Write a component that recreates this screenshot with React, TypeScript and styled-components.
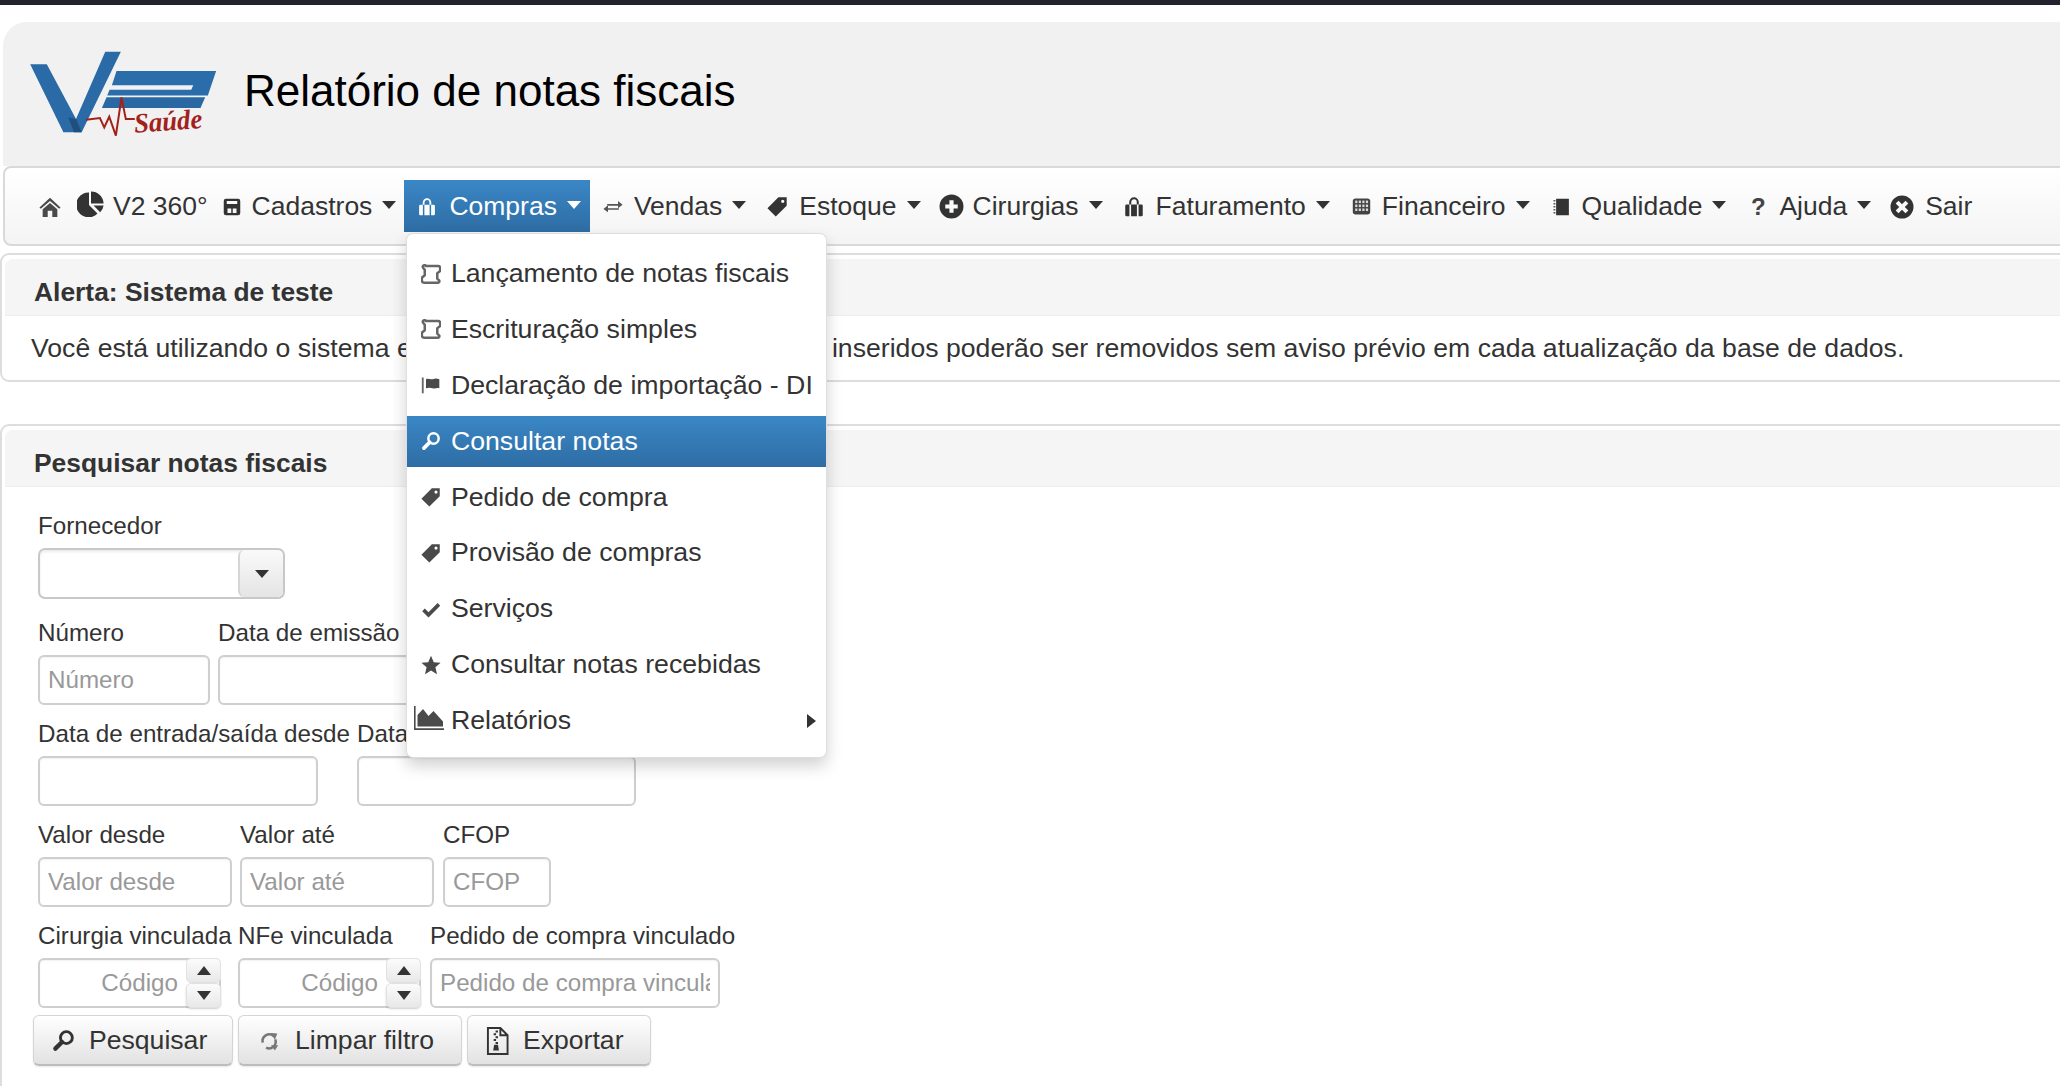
import React from "react";
import styled, { createGlobalStyle } from "styled-components";

const Global = createGlobalStyle`
  html, body { margin: 0; padding: 0; background: #fff; overflow: hidden; }
  body { font-family: "Liberation Sans", Arial, sans-serif; color: #333; }
  * { box-sizing: border-box; }
`;

const Page = styled.div`
  width: 2060px;
  height: 1086px;
  overflow: hidden;
`;
const TopBar = styled.div`
  height: 5px;
  background: #23232e;
`;
const Jumbotron = styled.header`
  margin: 17px 0 0 3px;
  height: 144px;
  width: 2100px;
  padding-left: 27px;
  display: flex;
  align-items: center;
  gap: 26px;
  background: #f1f1f1;
  border-top-left-radius: 24px;
`;
const Title = styled.h1`
  margin: 0 0 6px;
  font-size: 44px;
  font-weight: 400;
  color: #000;
`;
const Nav = styled.nav`
  margin-left: 3px;
  width: 2100px;
  height: 80px;
  padding-left: 20px;
  display: flex;
  align-items: center;
  border: 2px solid #d9d9d9;
  border-radius: 8px;
  background: linear-gradient(#fff, #f4f4f4);
`;
const NavItem = styled.div<{ $active?: boolean; $pl?: number; $pr?: number }>`
  position: relative;
  height: 52px;
  flex: none;
  display: flex;
  align-items: center;
  padding-top: 1px;
  padding-left: ${(p) => p.$pl ?? 14}px;
  padding-right: ${(p) => p.$pr ?? 7}px;
  font-size: 26.5px;
  color: ${(p) => (p.$active ? "#fff" : "#333")};
  background: ${(p) => (p.$active ? "linear-gradient(#3a87c6, #2e6da4)" : "transparent")};
`;
const NavIconSlot = styled.span<{ $w: number; $mr?: number; $up?: number }>`
  flex: none;
  display: flex;
  align-items: center;
  justify-content: center;
  width: ${(p) => p.$w}px;
  margin-right: ${(p) => p.$mr ?? 0}px;
  margin-bottom: ${(p) => p.$up ?? 0}px;
`;
const Caret = styled.span<{ $light?: boolean }>`
  width: 0;
  height: 0;
  margin: 0 0 3px 10px;
  border-top: 8px solid ${(p) => (p.$light ? "#fff" : "#333")};
  border-left: 7.5px solid transparent;
  border-right: 7.5px solid transparent;
`;
const Question = styled.span`
  font-weight: 700;
  font-size: 24px;
  color: #444;
`;
const Menu = styled.div`
  position: absolute;
  top: calc(100% + 1px);
  left: 2px;
  width: 421px;
  height: 525px;
  padding: 14px 0 0;
  background: #fff;
  border: 1px solid rgba(0, 0, 0, 0.13);
  border-radius: 7px;
  box-shadow: 0 8px 16px rgba(0, 0, 0, 0.18);
  z-index: 10;
`;
const MenuItem = styled.div<{ $active?: boolean }>`
  height: 51px;
  margin-bottom: 4.9px;
  padding: 0 10px 0 13.5px;
  display: flex;
  align-items: center;
  font-size: 26.7px;
  color: ${(p) => (p.$active ? "#fff" : "#333")};
  background: ${(p) => (p.$active ? "linear-gradient(#3a87c6, #2e6da4)" : "transparent")};
`;
const MenuIconSlot = styled.span<{ $wide?: boolean; $active?: boolean }>`
  flex: none;
  display: flex;
  align-items: center;
  justify-content: center;
  width: ${(p) => (p.$wide ? 30 : 20)}px;
  margin-left: ${(p) => (p.$wide ? -7 : 0)}px;
  margin-right: ${(p) => (p.$wide ? 7 : 10)}px;
  margin-bottom: ${(p) => (p.$wide ? 6 : 0)}px;
  color: ${(p) => (p.$active ? "#fff" : "#4a4a4a")};
`;
const SubCaret = styled.span`
  margin-left: auto;
  width: 0;
  height: 0;
  border-left: 9px solid #333;
  border-top: 7.5px solid transparent;
  border-bottom: 7.5px solid transparent;
`;
const Panel = styled.section<{ $mt: number; $h: number }>`
  margin-top: ${(p) => p.$mt}px;
  width: 2100px;
  height: ${(p) => p.$h}px;
  padding: 4px 0 0 3px;
  border: 2px solid #dddddd;
  border-radius: 9px;
`;
const PanelHeader = styled.h3`
  margin: 0;
  height: 57px;
  padding: 10px 0 0 29px;
  display: flex;
  align-items: center;
  font-size: 26.4px;
  font-weight: 700;
  color: #333;
  background: #f5f5f5;
  border-bottom: 1px solid #eeeeee;
  border-radius: 8px 8px 0 0;
`;
const PanelBody = styled.p`
  margin: 0;
  height: 64px;
  padding-left: 26px;
  display: flex;
  align-items: center;
  font-size: 26.6px;
  letter-spacing: 0.025px;
  white-space: nowrap;
  color: #333;
`;
const Form = styled.div`
  padding: 10px 0 0 33px;
`;
const Row = styled.div<{ $mb?: number }>`
  display: flex;
  gap: 8px;
  margin-bottom: ${(p) => p.$mb ?? 0}px;
`;
const Field = styled.div<{ $w: number }>`
  flex: none;
  width: ${(p) => p.$w}px;
`;
const Label = styled.label`
  display: block;
  height: 34px;
  margin: 12px 0 5px;
  line-height: 34px;
  font-size: 24.2px;
  white-space: nowrap;
  color: #333;
`;
const Input = styled.input<{ $w: number; $right?: boolean }>`
  display: block;
  width: ${(p) => p.$w}px;
  height: 50px;
  padding: 0 ${(p) => (p.$right ? 41 : 8)}px 0 8px;
  border: 2px solid #cfcfcf;
  border-radius: 6px;
  background: #fff;
  font: 24.2px "Liberation Sans", Arial, sans-serif;
  color: #555;
  text-align: ${(p) => (p.$right ? "right" : "left")};
  box-shadow: inset 0 1px 2px rgba(0, 0, 0, 0.06);
  &::placeholder { color: #999; opacity: 1; }
`;
const Select = styled.div`
  position: relative;
  width: 247px;
  height: 51px;
  border: 2px solid #c8c8c8;
  border-radius: 7px;
  background: #fff;
  box-shadow: inset 0 2px 3px rgba(0, 0, 0, 0.08);
`;
const SelectButton = styled.div`
  position: absolute;
  top: 0;
  right: 0;
  bottom: 0;
  width: 45px;
  display: flex;
  align-items: center;
  justify-content: center;
  border-left: 2px solid #d5d5d5;
  border-radius: 6px;
  background: linear-gradient(#fafafa, #e4e4e4);
`;
const SelectCaret = styled.span`
  width: 0;
  height: 0;
  border-top: 8px solid #333;
  border-left: 7.5px solid transparent;
  border-right: 7.5px solid transparent;
`;
const SpinWrap = styled.div`
  position: relative;
  width: fit-content;
`;
const SpinStack = styled.div`
  position: absolute;
  top: 0;
  right: 0;
  width: 35px;
  height: 50px;
  display: flex;
  flex-direction: column;
`;
const SpinButton = styled.div<{ $down?: boolean }>`
  flex: 1;
  display: flex;
  align-items: center;
  justify-content: center;
  border: 1px solid #e2e2e2;
  border-radius: 5px;
  background: linear-gradient(#fbfbfb, #e8e8e8);
  box-shadow: ${(p) => (p.$down ? "0 1px 2px rgba(0,0,0,.2)" : "none")};
`;
const SpinArrow = styled.span<{ $down?: boolean }>`
  width: 0;
  height: 0;
  border-left: 7px solid transparent;
  border-right: 7px solid transparent;
  ${(p) => (p.$down ? "border-top: 9px solid #333;" : "border-bottom: 9px solid #333;")}
`;
const Actions = styled.div`
  display: flex;
  gap: 5px;
  margin: 7px 0 0 -5px;
`;
const Button = styled.button<{ $w: number; $iw: number; $mr: number; $pl: number }>`
  width: ${(p) => p.$w}px;
  height: 51px;
  padding: 1px 0 0 ${(p) => p.$pl}px;
  display: flex;
  align-items: center;
  border: 1px solid #d5d5d5;
  border-bottom: 2px solid #bdbdbd;
  border-radius: 6px;
  background: linear-gradient(#ffffff, #e2e2e2);
  box-shadow: 0 1px 2px rgba(0, 0, 0, 0.1);
  font: 26.6px "Liberation Sans", Arial, sans-serif;
  color: #333;
  svg { flex: none; width: ${(p) => p.$iw}px; margin-right: ${(p) => p.$mr}px; }
`;

type IconProps = { s?: number; h?: number };
const G: React.FC<IconProps & { vb?: string; children: React.ReactNode }> = ({ s = 20, h, vb = "0 0 24 24", children }) => (
  <svg width={s} height={h ?? s} viewBox={vb} fill="currentColor" aria-hidden="true">
    {children}
  </svg>
);
const Home = (p: IconProps) => (
  <G {...p}>
    <path d="M12 2 0.5 12.5 2 14 12 5.5 22 14 23.5 12.5 12 2Z" fill="#4a4a4a" />
    <path fillRule="evenodd" d="M12 7.5 4 14.5V23H20V14.5L12 7.5ZM9.5 23V16H14.5V23H9.5Z" fill="#4a4a4a" />
  </G>
);
const Pie = (p: IconProps) => (
  <G {...p} vb="0 0 27 26">
    <path d="M12 1.5V14L20.5 22.5A12.4 12.4 0 1 1 12 1.5Z" />
    <path d="M14 .5A12.4 12.4 0 0 1 26.6 12.5H14Z" />
    <path d="M16.5 14.5H26.6A12 12 0 0 1 23.2 21.2Z" />
  </G>
);
const Save = (p: IconProps) => (
  <G {...p}>
    <path fillRule="evenodd" d="M4 1H20A3 3 0 0 1 23 4V20A3 3 0 0 1 20 23H4A3 3 0 0 1 1 20V4A3 3 0 0 1 4 1ZM5 4V8H19V4H5ZM6 14V20H11V14H6ZM13 14V20H18V14H13Z" />
  </G>
);
const Bag = (p: IconProps) => (
  <G {...p}>
    <path d="M7.5 9V6A4.5 4.5 0 0 1 16.5 6V9" fill="none" stroke="currentColor" strokeWidth="2.4" />
    <path d="M3 9H6.5V23H3A1.5 1.5 0 0 1 1.5 21.5V10.5A1.5 1.5 0 0 1 3 9ZM8.5 9H15.5V23H8.5ZM17.5 9H21A1.5 1.5 0 0 1 22.5 10.5V21.5A1.5 1.5 0 0 1 21 23H17.5Z" />
  </G>
);
const Transfer = (p: IconProps) => (
  <G {...p} vb="0 0 24 18">
    <path d="M5 6H18V2.5L23.5 7 18 11V8H5ZM19 11H6V7.5L.5 12 6 16V13H19Z" fill="#555" />
  </G>
);
const Tag = (p: IconProps) => (
  <G {...p}>
    <path fillRule="evenodd" d="M13 1.5 22.5 1.5 22.5 11 10 23.5.5 14 13 1.5ZM18 4.2A1.9 1.9 0 1 0 18 8 1.9 1.9 0 0 0 18 4.2Z" />
  </G>
);
const PlusCircle = (p: IconProps) => (
  <G {...p}>
    <path fillRule="evenodd" d="M12 .5A11.5 11.5 0 1 1 12 23.5 11.5 11.5 0 0 1 12 .5ZM10 6V10H6V14H10V18H14V14H18V10H14V6H10Z" />
  </G>
);
const XCircle = (p: IconProps) => (
  <G {...p}>
    <path fillRule="evenodd" d="M12 .5A11.5 11.5 0 1 1 12 23.5 11.5 11.5 0 0 1 12 .5ZM8.5 5.7 5.7 8.5 9.2 12 5.7 15.5 8.5 18.3 12 14.8 15.5 18.3 18.3 15.5 14.8 12 18.3 8.5 15.5 5.7 12 9.2 8.5 5.7Z" />
  </G>
);
const Grid = (p: IconProps) => (
  <G {...p}>
    <rect x="1" y="2" width="22" height="20" rx="3.5" fill="#444" />
    {[4.5, 9.5, 14.5].map((y) =>
      [4, 8.5, 13, 17.5].map((x) => <rect key={`${x}-${y}`} x={x} y={y} width="2.8" height="3.2" fill="#d8d8d8" />)
    )}
  </G>
);
const Book = (p: IconProps) => (
  <G {...p}>
    <rect x="5.5" y="1" width="17" height="22" fill="#333" />
    <path d="M2 2.5H4.5V4.5H2ZM2 6.5H4.5V8.5H2ZM2 10.5H4.5V12.5H2ZM2 14.5H4.5V16.5H2ZM2 18.5H4.5V20.5H2Z" fill="#555" />
  </G>
);
const Scroll = (p: IconProps) => (
  <G {...p}>
    <path
      d="M6 2.5H20.5A2.5 2.5 0 0 1 23 5V8.5L19.5 11V17.5L22 20A2 2 0 0 1 20 22.5H4A3 3 0 0 1 1 19.5V16.5L4.5 13.5V7L2.5 4.5A2 2 0 0 1 6 2.5Z"
      fill="none"
      stroke="#666"
      strokeWidth="3"
      strokeLinejoin="round"
    />
  </G>
);
const Flag = (p: IconProps) => (
  <G {...p}>
    <rect x="1" y="3" width="2.2" height="19" fill="#666" />
    <path d="M6 5C9 3.5 11 6 14 5S19 4 22 5V16C19 15 17 17 14 16S9 15 6 16Z" />
  </G>
);
const Search = (p: IconProps) => (
  <G {...p}>
    <circle cx="15" cy="9" r="6.2" fill="none" stroke="currentColor" strokeWidth="3" />
    <path d="M10.5 13.5 3.5 20.5" stroke="currentColor" strokeWidth="4.5" strokeLinecap="round" />
  </G>
);
const Check = (p: IconProps) => (
  <G {...p}>
    <path d="M3 13 9 19 21.5 6.5" fill="none" stroke="currentColor" strokeWidth="4.4" />
  </G>
);
const Star = (p: IconProps) => (
  <G {...p}>
    <path d="M12 1 15.3 8.6 23.5 9.4 17.3 14.8 19.2 23 12 18.7 4.8 23 6.7 14.8.5 9.4 8.7 8.6Z" />
  </G>
);
const AreaChart = (p: IconProps) => (
  <G {...p} vb="0 0 30 24">
    <path d="M0 0H1.6V22.2H30V24H0Z" />
    <path d="M3.5 20.5V9L9 3 14.5 10 19.5 5 29 15.5V20.5Z" />
  </G>
);
const Refresh = (p: IconProps) => (
  <G {...p}>
    <path d="M4.5 14A8 8 0 0 1 17.5 6" fill="none" stroke="#777" strokeWidth="3" />
    <path d="M19.5 10A8 8 0 0 1 8.5 20" fill="none" stroke="#777" strokeWidth="3" />
    <path d="M14 2.5 22 3 19 10.5Z" fill="#777" />
    <path d="M14.5 17 19 23.5 23 17Z" fill="#777" />
  </G>
);
const ZipFile = (p: IconProps) => (
  <G {...p} vb="0 0 24 30">
    <path d="M2 1.5H15L22.5 9V28.5H2ZM15 1.5V9H22.5" fill="none" stroke="currentColor" strokeWidth="2" />
    <path d="M10 4H12.5V6H10ZM8 7H10.5V9H8ZM10 10H12.5V12H10ZM8 13H10.5V15H8ZM10 16H12.5V18H10ZM8.5 19H12.5L13.5 25H7.5Z" />
  </G>
);

const Logo = () => (
  <svg width="188" height="87" viewBox="90 90 565 262" aria-label="V2 Saúde">
    <path d="M90 130H140L228 295 316 92H363L245 335H190Z" fill="#2a6aa6" />
    <path d="M228 295 245 335 222 335 205 290Z" fill="#1f4f7d" />
    <path d="M350 150H650L625 224H322L329 207H575L581 193H336Z" fill="#2b6cab" />
    <path d="M320 229H617L603 262H306Z" fill="#2a68a3" />
    <polyline
      points="258,297 300,292 313,320 328,288 348,345 365,230 378,295 405,295"
      fill="none"
      stroke="#a3211b"
      strokeWidth="6"
    />
    <text
      x="405"
      y="336"
      transform="rotate(-4 405 336)"
      fontFamily="'Liberation Serif', serif"
      fontStyle="italic"
      fontWeight="700"
      fontSize="84"
      fill="#a3211b"
      textLength="205"
      lengthAdjust="spacingAndGlyphs"
    >
      Saúde
    </text>
  </svg>
);

const navItems: {
  label?: string;
  icon: React.ReactNode;
  w: number;
  mr?: number;
  pl?: number;
  pr?: number;
  up?: number;
  caret?: boolean;
}[] = [
  { icon: <Home s={22} />, w: 22, pr: 2 },
  { label: "V2 360°", icon: <Pie s={27} h={26} />, w: 27, mr: 9, pr: 1, up: 6 },
  { label: "Cadastros", icon: <Save s={18} />, w: 18, mr: 11, caret: true, pr: 8 },
];
const navAfter: typeof navItems = [
  { label: "Vendas", icon: <Transfer s={20} h={15} />, w: 20, mr: 11, caret: true, pl: 13 },
  { label: "Estoque", icon: <Tag s={21} />, w: 21, mr: 11, caret: true },
  { label: "Cirurgias", icon: <PlusCircle s={25} />, w: 25, mr: 9, caret: true, pl: 11 },
  { label: "Faturamento", icon: <Bag s={20} />, w: 20, mr: 12, caret: true },
  { label: "Financeiro", icon: <Grid s={19} />, w: 19, mr: 11, caret: true, pl: 15 },
  { label: "Qualidade", icon: <Book s={20} />, w: 18, mr: 12, caret: true, pl: 15 },
  { label: "Ajuda", icon: <Question>?</Question>, w: 22, mr: 10, caret: true },
  { label: "Sair", icon: <XCircle s={24} />, w: 24, mr: 11, pl: 12 },
];

const NavEntry: React.FC<(typeof navItems)[number]> = ({ label, icon, w, mr, pl, pr, up, caret }) => (
  <NavItem $pl={pl} $pr={pr}>
    <NavIconSlot $w={w} $mr={mr} $up={up}>
      {icon}
    </NavIconSlot>
    {label}
    {caret && <Caret />}
  </NavItem>
);

const menuItems: { label: string; icon: React.ReactNode; active?: boolean; wide?: boolean; sub?: boolean }[] = [
  { label: "Lançamento de notas fiscais", icon: <Scroll s={20} /> },
  { label: "Escrituração simples", icon: <Scroll s={20} /> },
  { label: "Declaração de importação - DI", icon: <Flag s={20} /> },
  { label: "Consultar notas", icon: <Search s={20} />, active: true },
  { label: "Pedido de compra", icon: <Tag s={20} /> },
  { label: "Provisão de compras", icon: <Tag s={20} /> },
  { label: "Serviços", icon: <Check s={20} /> },
  { label: "Consultar notas recebidas", icon: <Star s={20} /> },
  { label: "Relatórios", icon: <AreaChart s={30} h={24} />, wide: true, sub: true },
];

const Spin = ({ w }: { w: number }) => (
  <SpinWrap>
    <Input $w={w} $right placeholder="Código" />
    <SpinStack>
      <SpinButton>
        <SpinArrow />
      </SpinButton>
      <SpinButton $down>
        <SpinArrow $down />
      </SpinButton>
    </SpinStack>
  </SpinWrap>
);

export default function App() {
  return (
    <Page>
      <Global />
      <TopBar />
      <Jumbotron>
        <Logo />
        <Title>Relatório de notas fiscais</Title>
      </Jumbotron>
      <Nav>
        {navItems.map((n, i) => (
          <NavEntry key={i} {...n} />
        ))}
        <NavItem $active $pr={9}>
          <NavIconSlot $w={18} $mr={13}>
            <Bag s={18} />
          </NavIconSlot>
          Compras
          <Caret $light />
          <Menu>
            {menuItems.map((m) => (
              <MenuItem key={m.label} $active={m.active}>
                <MenuIconSlot $wide={m.wide} $active={m.active}>
                  {m.icon}
                </MenuIconSlot>
                {m.label}
                {m.sub && <SubCaret />}
              </MenuItem>
            ))}
          </Menu>
        </NavItem>
        {navAfter.map((n, i) => (
          <NavEntry key={i} {...n} />
        ))}
      </Nav>
      <Panel $mt={7} $h={129}>
        <PanelHeader>Alerta: Sistema de teste</PanelHeader>
        <PanelBody>
          Você está utilizando o sistema em modo de testes. Todos os dados inseridos poderão ser removidos sem aviso
          prévio em cada atualização da base de dados.
        </PanelBody>
      </Panel>
      <Panel $mt={42} $h={700}>
        <PanelHeader>Pesquisar notas fiscais</PanelHeader>
        <Form>
          <Row $mb={5}>
            <Field $w={247}>
              <Label>Fornecedor</Label>
              <Select>
                <SelectButton>
                  <SelectCaret />
                </SelectButton>
              </Select>
            </Field>
          </Row>
          <Row>
            <Field $w={172}>
              <Label>Número</Label>
              <Input $w={172} placeholder="Número" />
            </Field>
            <Field $w={280}>
              <Label>Data de emissão</Label>
              <Input $w={280} />
            </Field>
          </Row>
          <Row>
            <Field $w={311}>
              <Label>Data de entrada/saída desde</Label>
              <Input $w={280} />
            </Field>
            <Field $w={311}>
              <Label>Data de entrada/saída até</Label>
              <Input $w={279} />
            </Field>
          </Row>
          <Row>
            <Field $w={194}>
              <Label>Valor desde</Label>
              <Input $w={194} placeholder="Valor desde" />
            </Field>
            <Field $w={195}>
              <Label>Valor até</Label>
              <Input $w={194} placeholder="Valor até" />
            </Field>
            <Field $w={108}>
              <Label>CFOP</Label>
              <Input $w={108} placeholder="CFOP" />
            </Field>
          </Row>
          <Row>
            <Field $w={192}>
              <Label>Cirurgia vinculada</Label>
              <Spin w={183} />
            </Field>
            <Field $w={184}>
              <Label>NFe vinculada</Label>
              <Spin w={183} />
            </Field>
            <Field $w={290}>
              <Label>Pedido de compra vinculado</Label>
              <Input $w={290} placeholder="Pedido de compra vinculado" />
            </Field>
          </Row>
          <Actions>
            <Button $w={200} $iw={23} $mr={14} $pl={18}>
              <Search s={23} />
              Pesquisar
            </Button>
            <Button $w={224} $iw={20} $mr={16} $pl={20}>
              <Refresh s={20} />
              Limpar filtro
            </Button>
            <Button $w={184} $iw={23} $mr={14} $pl={18}>
              <ZipFile s={23} h={30} />
              Exportar
            </Button>
          </Actions>
        </Form>
      </Panel>
    </Page>
  );
}
